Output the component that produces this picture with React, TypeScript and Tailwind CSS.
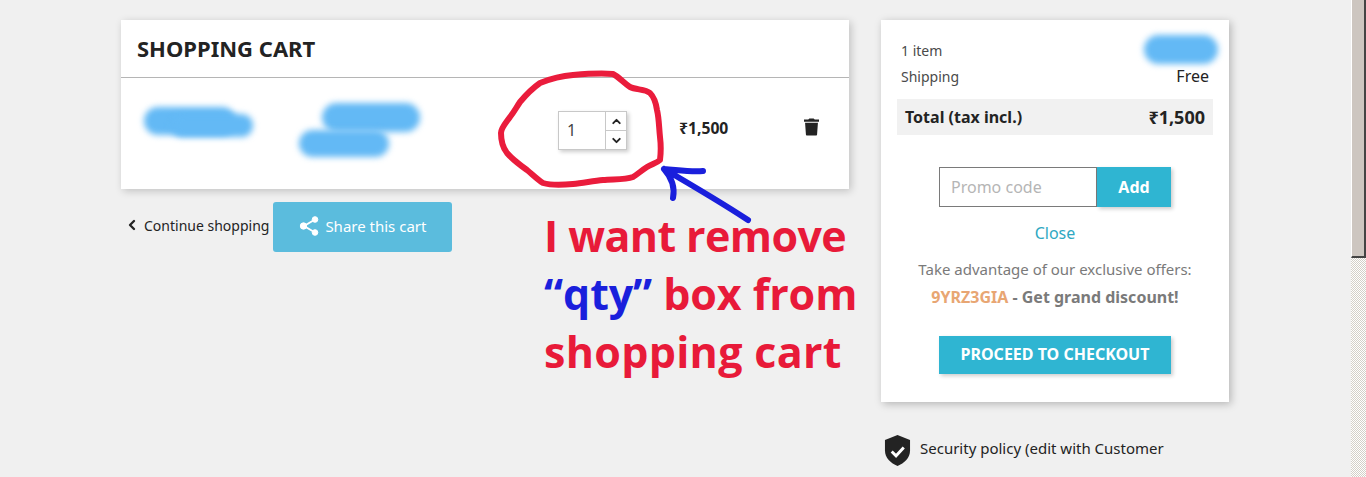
import { ChevronLeft, ChevronUp, ChevronDown } from "lucide-react";

const Smudge = ({ className }: { className: string }) => (
	<div className={`absolute rounded-full bg-[#63b9f5] blur-[3px] ${className}`} />
);

const App = () => {
	return (
		<div className="relative h-[477px] w-[1366px] overflow-hidden bg-[#f0f0f0] font-['Noto_Sans',sans-serif] text-[#232323]">
			{/* scrollbar */}
			<div className="absolute right-0 top-0 h-full w-[15px] bg-[repeating-conic-gradient(#d4d0c8_0_25%,#ffffff_0_50%)] bg-[length:2px_2px]">
				<div className="h-[258px] w-[15px] border-b-2 border-l border-r-2 border-b-[#444] border-l-white border-r-[#444] bg-[#cdc6c0]" />
			</div>

			<div className="flex items-start pl-[121px] pt-[20px]">
				{/* Left column */}
				<div className="w-[728px]">
					<div className="bg-white shadow-[2px_2px_8px_0_rgba(0,0,0,0.2)]">
						<div className="flex h-[58px] items-center border-b border-[#b5b5b5] pl-[16px]">
							<h1 className="text-[22px] font-bold text-[#232323]">SHOPPING CART</h1>
						</div>
						<div className="relative flex h-[111px] items-start">
							<Smudge className="left-[23px] top-[29px] h-[28px] w-[92px]" />
							<Smudge className="left-[50px] top-[36px] h-[23px] w-[82px]" />
							<Smudge className="left-[201px] top-[25px] h-[29px] w-[98px]" />
							<Smudge className="left-[178px] top-[52px] h-[27px] w-[90px]" />

							<div className="ml-[437px] mt-[33px] flex h-[39px] w-[69px] border border-[#c8c8c8] shadow-[2px_2px_4px_0_rgba(0,0,0,0.2)]">
								<div className="flex w-[47px] items-center pb-[1px] pl-[8px] text-[16px] text-[#444] antialiased">1</div>
								<div className="flex w-[21px] flex-col border-l border-[#c8c8c8]">
									<div className="flex h-[19px] items-center justify-center border-b border-[#c8c8c8]">
										<ChevronUp size={13} strokeWidth={3.5} className="text-[#232323]" />
									</div>
									<div className="flex flex-1 items-center justify-center">
										<ChevronDown size={13} strokeWidth={3.5} className="text-[#232323]" />
									</div>
								</div>
							</div>

							<div className="ml-[52px] mt-[40px] text-[15.7px] font-bold leading-[20px] text-[#232323]">₹1,500</div>

							<svg viewBox="0 0 14 16" className="ml-[76px] mt-[40px] h-[18px] w-[15px] fill-[#232323]">
								<path d="M5 0h4l1 1h4v2H0V1h4zM1 4h12l-.8 11c0 .6-.5 1-1 1H2.800c-.5 0-1-.4-1-1z" />
							</svg>
						</div>
					</div>

					<div className="mt-[13px] flex items-start">
						<div className="flex h-[50px] items-center pb-[4px] text-[14px] text-[#232323]">
							<ChevronLeft size={16} strokeWidth={3.5} className="ml-[3px] mr-[4px]" />
							Continue shopping
						</div>
						<button
							type="button"
							className="ml-[4px] flex h-[50px] w-[179px] items-center justify-center rounded-[3px] bg-[#5bbcdd] pb-[2px] text-[15px] text-white"
						>
							<svg viewBox="0 0 20 20" className="mr-[6px] h-[20px] w-[20px] fill-white stroke-white">
								<line x1="16" y1="3.500" x2="5" y2="10" strokeWidth="2" />
								<line x1="16" y1="16.500" x2="5" y2="10" strokeWidth="2" />
								<circle cx="16" cy="3.500" r="2.800" />
								<circle cx="16" cy="16.500" r="2.800" />
								<circle cx="4.500" cy="10" r="3.200" />
							</svg>
							Share this cart
						</button>
					</div>
				</div>

				{/* Summary column */}
				<div className="ml-[32px] w-[348px]">
					<div className="h-[382px] bg-white px-[16px] pt-[17px] shadow-[2px_2px_8px_0_rgba(0,0,0,0.25)]">
						<div className="relative flex h-[26px] items-center justify-between px-[4px] text-[14px] text-[#4a4a4a]">
							<span>1 item</span>
							<Smudge className="right-[-5px] top-[-2px] h-[29px] w-[74px]" />
						</div>
						<div className="flex h-[26px] items-center justify-between px-[4px] text-[14px] text-[#4a4a4a]">
							<span>Shipping</span>
							<span className="text-[16px] text-[#232323]">Free</span>
						</div>
						<div className="mt-[10px] flex h-[36px] items-center justify-between bg-[#f1f1f1] px-[8px] font-bold text-[#232323]">
							<span className="text-[16px]">Total (tax incl.)</span>
							<span className="text-[18px]">₹1,500</span>
						</div>

						<div className="mt-[32px] flex justify-center">
							<div className="flex h-[40px] w-[232px]">
								<div className="flex w-[158px] items-center border border-[#7a7a7a] pl-[11px] text-[16px] text-[#b5b5b5]">Promo code</div>
								<div className="flex flex-1 items-center justify-center bg-[#2fb5d2] text-[16px] font-bold text-white shadow-[2px_2px_4px_0_rgba(0,0,0,0.2)]">Add</div>
							</div>
						</div>

						<div className="mt-[13px] text-center text-[16px] leading-[26px] text-[#2fa8c2]">Close</div>

						<p className="mt-[13px] text-center text-[15px] leading-[20px] text-[#7a7a7a]">Take advantage of our exclusive offers:</p>
						<p className="mt-[8px] text-center text-[16px] font-bold leading-[20px] text-[#7a7a7a]">
							<span className="text-[#e8a673]">9YRZ3GIA</span> - Get grand discount!
						</p>

						<div className="mt-[29px] flex justify-center">
							<button
								type="button"
								className="h-[38px] w-[232px] bg-[#2fb5d2] pb-[2px] text-[16px] font-bold text-white shadow-[2px_2px_4px_0_rgba(0,0,0,0.2)]"
							>
								PROCEED TO CHECKOUT
							</button>
						</div>
					</div>

					<div className="mt-[32px] flex items-start pl-[3px] text-[15px] text-[#232323]">
						<svg viewBox="0 0 28 32" className="mr-[9px] h-[33px] w-[27px]">
							<path d="M14 0 27 5v11c0 8-6 13-13 16C7 29 1 24 1 16V5z" fill="#232323" />
							<path d="M8 17l4.500 4.500L20.500 13" fill="none" stroke="#fff" strokeWidth="3" />
						</svg>
						<span className="mt-[4px] leading-[20px]">Security policy (edit with Customer</span>
					</div>
				</div>
			</div>

			{/* hand drawn annotation */}
			<svg viewBox="0 0 1366 477" className="pointer-events-none absolute left-0 top-0 h-[477px] w-[1366px]" fill="none" strokeLinecap="round" strokeLinejoin="round">
				<path
					d="M613 74C600 73 585 74 573 75C560 76 550 79 540 83C530 90 525 96 520 102C516 108 514 112 510 117C505 124 501 128 501 133C501 141 503 148 507 153C513 160 520 165 527 170C533 175 538 180 543 183C553 186 563 185 573 184C583 183 593 181 603 180C613 179 625 180 633 177C638 174 642 170 647 167C652 164 657 163 660 160C661 152 661 145 660 137C659 128 659 118 657 110C656 103 654 97 650 93C645 89 636 90 630 87C624 83 619 77 613 74Z"
					stroke="#ea1c3c"
					strokeWidth="6"
				/>
				<path
					d="M748 220C725 205 695 187 664 169M664 169C678 170 690 172 703 171M664 169C672 178 675 188 673 198"
					stroke="#1a1fdc"
					strokeWidth="6"
				/>
			</svg>
			<div className="absolute left-[544px] top-[207px] font-['Open_Sans',sans-serif] text-[43px] font-bold leading-[58px] tracking-[-0.4px] text-[#e81a39]">
				<div className="tracking-[-0.6px]">I want remove</div>
				<div className="tracking-[-0.1px]">
					<span className="text-[#1a1fdc]">“qty”</span> box from
				</div>
				<div className="tracking-[0.3px]">shopping cart</div>
			</div>
		</div>
	);
};

export default App;
